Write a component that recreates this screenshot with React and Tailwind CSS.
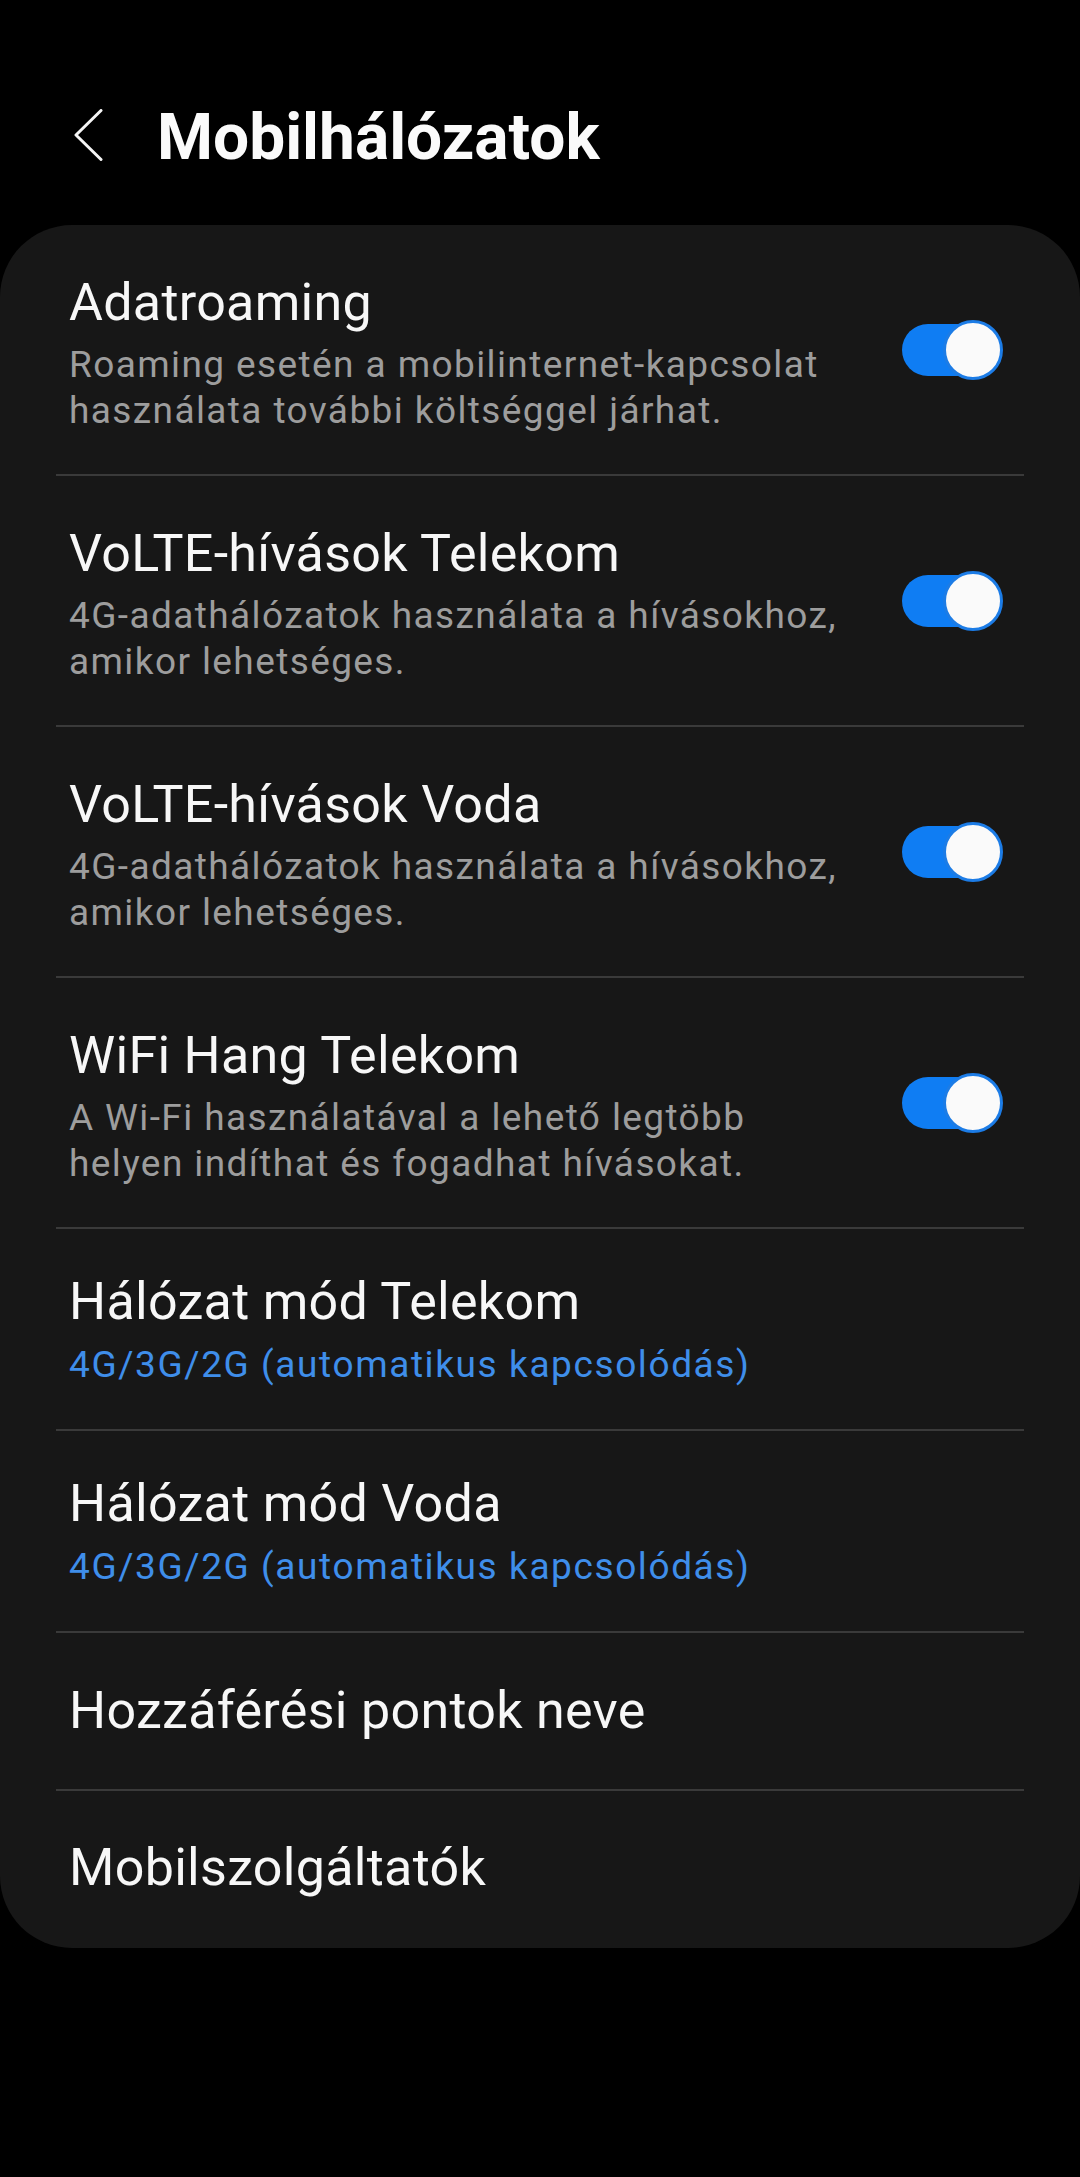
import React from "react";

const switches = [
  {
    title: "Adatroaming",
    lines: ["Roaming esetén a mobilinternet-kapcsolat", "használata további költséggel járhat."],
  },
  {
    title: "VoLTE-hívások Telekom",
    lines: ["4G-adathálózatok használata a hívásokhoz,", "amikor lehetséges."],
  },
  {
    title: "VoLTE-hívások Voda",
    lines: ["4G-adathálózatok használata a hívásokhoz,", "amikor lehetséges."],
  },
  {
    title: "WiFi Hang Telekom",
    lines: ["A Wi-Fi használatával a lehető legtöbb", "helyen indíthat és fogadhat hívásokat."],
  },
];

const modes = [
  { title: "Hálózat mód Telekom", value: "4G/3G/2G (automatikus kapcsolódás)" },
  { title: "Hálózat mód Voda", value: "4G/3G/2G (automatikus kapcsolódás)" },
];

const Divider = () => <div className="h-[2px] bg-[#3a3a3a]" />;

const Toggle = () => (
  <div className="relative w-[101px] h-[60px] mr-[21px] mb-[8px] shrink-0">
    <div className="absolute left-0 top-[4px] w-[96px] h-[52px] rounded-full bg-[#0f7df3]" />
    <div className="absolute right-0 top-0 w-[60px] h-[60px] rounded-full bg-[#fafafa] border-[3px] border-[#1c7ce6]" />
  </div>
);

const Title = ({ children }) => (
  <div className="text-[52px] leading-[60px] tracking-[0.3px] text-[#f7f7f7] whitespace-nowrap">
    {children}
  </div>
);

const SwitchRow = ({ title, lines }) => (
  <div className="flex items-center pt-[48px] pb-[40px]">
    <div className="flex-1 pl-[13px]">
      <Title>{title}</Title>
      <div className="mt-[9px] text-[37px] leading-[46px] tracking-[1.4px] text-[#9d9d9d]">
        {lines.map((l) => (
          <div key={l} className="whitespace-nowrap">
            {l}
          </div>
        ))}
      </div>
    </div>
    <Toggle />
  </div>
);

export default function App() {
  return (
    <div className="min-h-[2177px] bg-black font-['Roboto',sans-serif]">
      <div className="flex items-start pt-[100px] pl-[74px]">
        <svg width="30" height="52" viewBox="0 0 30 52" className="mt-[9px]" fill="none">
          <polyline
            points="27,1.5 2,26 27,50.5"
            stroke="#f5f5f5"
            strokeWidth="3"
            strokeLinecap="round"
            strokeLinejoin="round"
          />
        </svg>
        <h1 className="ml-[53px] text-[64px] leading-[76px] font-bold text-[#fafafa]">Mobilhálózatok</h1>
      </div>

      <div className="mt-[49px] bg-[#171717] rounded-[72px] px-[56px]">
        {switches.map((s) => (
          <div key={s.title}>
            <SwitchRow {...s} />
            <Divider />
          </div>
        ))}

        {modes.map((m) => (
          <div key={m.title}>
            <div className="pl-[13px] pt-[43px] pb-[41px]">
              <Title>{m.title}</Title>
              <div className="mt-[10px] text-[37px] leading-[46px] tracking-[1.6px] text-[#3f8eea] whitespace-nowrap">
                {m.value}
              </div>
            </div>
            <Divider />
          </div>
        ))}

        <div className="pl-[13px] py-[48px]">
          <Title>Hozzáférési pontok neve</Title>
        </div>
        <Divider />
        <div className="pl-[13px] pt-[47px] pb-[50px]">
          <Title>Mobilszolgáltatók</Title>
        </div>
      </div>
    </div>
  );
}
